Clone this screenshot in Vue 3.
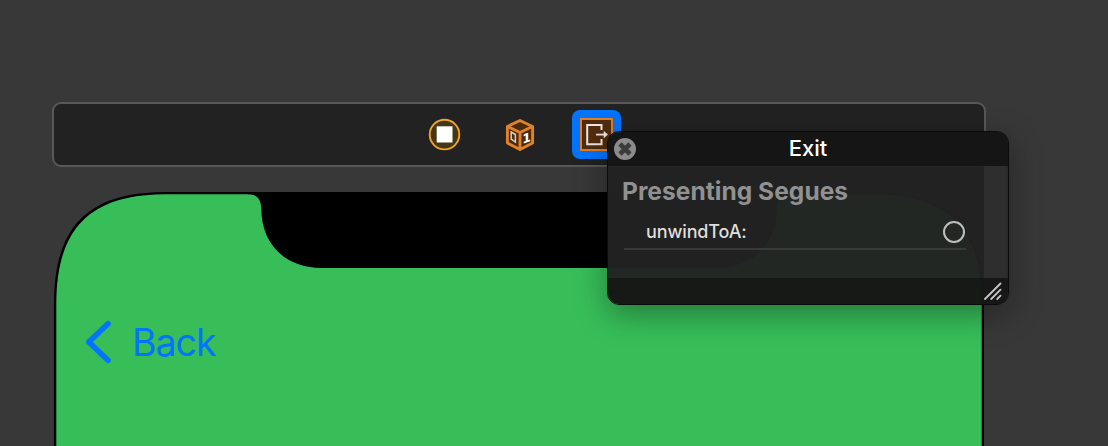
<script setup>
import { ref } from 'vue'

const title = 'Exit'
const heading = 'Presenting Segues'
const segues = ref(['unwindToA:'])
</script>
<template>
  <div class="canvas">
    <div class="scenebar">
      <svg class="controller" width="34" height="34" viewBox="0 0 34 34">
        <circle cx="16.5" cy="16.6" r="14.8" fill="#453713" stroke="#eea32b" stroke-width="1.9" />
        <rect x="8.7" y="8.3" width="15.8" height="16.2" fill="#fff" />
      </svg>
      <svg class="responder" width="32" height="34" viewBox="0 0 32 34">
        <path d="M16 2.5 28.6 8.5V25L16 31.5 3.4 25V8.5Z" fill="#4c2b0c" stroke="#e28228" stroke-width="2.9" stroke-linejoin="round" />
        <path d="M3.6 8.5 16 14.5 28.4 8.5M16 14.5V31" fill="none" stroke="#e28228" stroke-width="2.9" />
        <path d="M7.2 14 11.4 16.5V24L7.2 21Z" fill="none" stroke="#d9cfc6" stroke-width="1.5" />
        <text class="digit" transform="translate(18.2 26) skewY(-20)">1</text>
      </svg>
      <div class="selected">
        <svg width="33" height="33" viewBox="0 0 33 33">
          <rect x="1" y="1" width="31" height="31" fill="#512d0d" stroke="#e07f26" stroke-width="2" />
          <path d="M21.5 12V7H7.2V26.2H21.5V21" fill="none" stroke="#eee7e2" stroke-width="2" />
          <path d="M16 16.6H25" stroke="#eee7e2" stroke-width="1.8" />
          <path d="M23.7 12.9 28 16.6 23.7 20.3Z" fill="#eee7e2" />
        </svg>
      </div>
    </div>

    <div class="phone">
      <svg class="screen" width="930" height="254" viewBox="0 0 930 254">
        <path d="M0 254V112C0 34 34 0 112 0H818C896 0 930 34 930 112V254Z" fill="#000" />
        <path d="M2.3 254V112C2.3 36 36 2.2 112 2.2H818C894 2.2 927.7 36 927.7 112V254Z" fill="#37be59" />
        <path d="M194 1V2.2C202 2.2 207 6 207.3 17C207.5 52 231 76 268 76H662C699 76 722.5 52 722.7 17C723 6 728 2.2 736 2.2V1Z" fill="#000" />
      </svg>
      <div class="back">
        <svg width="28" height="44" viewBox="0 0 28 44">
          <path d="M24 3.7 4.8 22 24 40.3" fill="none" stroke="#0274fd" stroke-width="5.6" stroke-linecap="round" stroke-linejoin="round" />
        </svg>
        <span>Back</span>
      </div>
    </div>

    <div class="hud">
      <div class="titlebar">
        <svg class="close" width="22" height="22" viewBox="0 0 22 22">
          <circle cx="11" cy="11" r="11" fill="#8b8b8b" />
          <path d="M6 6 16 16M16 6 6 16" stroke="#3b3b3b" stroke-width="4.6" />
        </svg>
        <span>{{ title }}</span>
      </div>
      <div class="content">
        <div class="list">
          <h2>{{ heading }}</h2>
          <div v-for="segue in segues" :key="segue" class="segue">
            <span>{{ segue }}</span>
            <i class="outlet"></i>
          </div>
        </div>
        <div class="edge"></div>
      </div>
      <div class="footer">
        <svg width="20" height="20" viewBox="0 0 20 20">
          <path d="M2 18 17.5 2.5M8.2 18 17.5 8.7M14.2 18 17.5 14.7" stroke="#c3c3c3" stroke-width="1.9" stroke-linecap="round" />
        </svg>
      </div>
    </div>
  </div>
</template>
<style>
body {
  margin: 0;
  background: #383838;
}
</style>
<style scoped>
.canvas {
  position: relative;
  box-sizing: border-box;
  width: 1108px;
  height: 446px;
  padding: 102px 0 0 52px;
  overflow: hidden;
  background: #383838;
  font-family: Inter, 'Liberation Sans', sans-serif;
}
svg {
  display: block;
  flex: none;
}
.scenebar {
  display: flex;
  align-items: center;
  box-sizing: border-box;
  width: 934px;
  height: 65px;
  padding-left: 374px;
  border: 2px solid #585858;
  border-radius: 9px;
  background: #222;
}
.responder {
  margin-left: 42px;
}
.digit {
  fill: #fff;
  font-family: 'DejaVu Sans', sans-serif;
  font-size: 12.5px;
  font-weight: 700;
}
.selected {
  display: flex;
  align-items: center;
  justify-content: center;
  width: 49px;
  height: 49px;
  margin-left: 36px;
  border-radius: 8px;
  background: #0274fd;
}
.phone {
  display: grid;
  width: 930px;
  margin: 25px 0 0 2px;
}
.screen,
.back {
  grid-area: 1 / 1;
}
.back {
  display: flex;
  align-items: center;
  align-self: start;
  height: 44px;
  margin: 128px 0 0 30px;
  color: #0274fd;
  font-size: 37.5px;
}
.back span {
  margin-left: 20px;
  letter-spacing: -1px;
}
.hud {
  position: absolute;
  left: 607px;
  top: 131px;
  box-sizing: border-box;
  width: 402px;
  height: 174px;
  border: 1px solid #0b0b0b;
  border-radius: 12px;
  overflow: hidden;
  box-shadow: 0 9px 32px rgba(0, 0, 0, 0.36);
}
.titlebar {
  display: flex;
  align-items: center;
  justify-content: center;
  position: relative;
  box-sizing: border-box;
  height: 34px;
  padding-bottom: 2px;
  background: rgba(21, 21, 21, 0.99);
  color: #fff;
  font-size: 22px;
  font-weight: 500;
}
.close {
  position: absolute;
  left: 6px;
  top: 6px;
}
.content {
  display: flex;
  height: 112px;
  background: rgba(34, 34, 34, 0.97);
}
.list {
  flex: 1;
  padding: 0 18px 0 15px;
}
h2 {
  margin: 0 0 0 -1px;
  padding: 9px 0 1px;
  color: #919191;
  font-size: 24.5px;
  font-weight: 700;
  letter-spacing: 0.05px;
  line-height: 32px;
  white-space: nowrap;
}
.segue {
  display: flex;
  align-items: center;
  justify-content: space-between;
  box-sizing: border-box;
  height: 36px;
  margin: 6px 0 0 1px;
  padding: 1px 0 0 22px;
  border-bottom: 2px solid #383939;
  color: #dedede;
  font-size: 18px;
  font-weight: 500;
  letter-spacing: -0.12px;
}
.outlet {
  box-sizing: border-box;
  width: 22px;
  height: 22px;
  margin: 1px 1px 0 0;
  border: 2px solid #bdbfbe;
  border-radius: 50%;
}
.edge {
  width: 24px;
  box-sizing: border-box;
  border-right: 2px solid #292929;
  background: #2e2e2e;
}
.footer {
  display: flex;
  justify-content: flex-end;
  height: 26px;
  padding: 3px 5px 0 0;
  box-sizing: border-box;
  background: rgba(22, 22, 22, 0.985);
}
</style>
